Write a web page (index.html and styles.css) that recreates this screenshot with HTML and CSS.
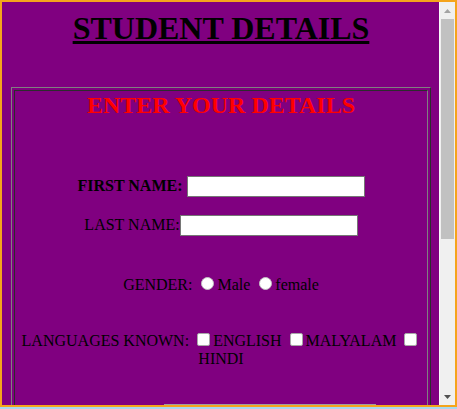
FILE: index.html
```html
<!DOCTYPE html>
<html>
<head>
<meta charset="utf-8">
<title>Student Details</title>
<link rel="stylesheet" href="styles.css">
</head>
<body>
<div class="screen">
  <div class="window">
    <div class="viewport">
      <div class="page">
        <h1 class="title">STUDENT DETAILS</h1>
        <div class="frame">
          <div class="cell">
            <h2 class="subtitle">ENTER YOUR DETAILS</h2>
            <div class="row row-first"><b>FIRST NAME:</b> <input class="text-input" type="text"></div>
            <div class="row row-last">LAST NAME:<input class="text-input" type="text"></div>
            <div class="row row-gender">GENDER: <input class="radio" type="radio" name="gender">Male <input class="radio" type="radio" name="gender">female</div>
            <div class="row row-lang">LANGUAGES KNOWN: <input class="check" type="checkbox">ENGLISH <input class="check" type="checkbox">MALYALAM <input class="check" type="checkbox"><br>HINDI</div>
            <div class="row row-address"><textarea class="address"></textarea></div>
          </div>
        </div>
      </div>
    </div>
    <div class="scrollbar">
      <div class="sb-btn"><svg width="7" height="4" viewBox="0 0 7 4"><polygon points="0,4 3.5,0 7,4" fill="#a3a3a3"/></svg></div>
      <div class="sb-track"><div class="sb-thumb"></div></div>
      <div class="sb-btn"><svg width="7" height="4" viewBox="0 0 7 4"><polygon points="0,0 7,0 3.5,4" fill="#505050"/></svg></div>
    </div>
  </div>
</div>
</body>
</html>
```

FILE: styles.css
```css
html, body {
  margin: 0;
  padding: 0;
}

body {
  width: 457px;
  height: 409px;
  overflow: hidden;
  font-family: "Liberation Serif", "Times New Roman", serif;
  font-size: 16px;
  color: #000;
  background: #a6d8f0;
}

.screen {
  height: 409px;
  box-sizing: border-box;
  border-bottom: 2px solid #a6d8f0;
}

.window {
  display: flex;
  height: 407px;
  box-sizing: border-box;
  border: 2px solid #f5a41c;
}

.viewport {
  flex: 1;
  background: #800080;
  overflow: hidden;
}

.page {
  padding: 8px 8px 0 9px;
}

.title {
  margin: 0 0 40px;
  font-size: 32px;
  font-weight: bold;
  line-height: normal;
  text-align: center;
  text-decoration: underline;
}

.frame {
  width: 420px;
  box-sizing: border-box;
  border: 1px outset grey;
  padding: 2px;
}

.cell {
  border: 1px inset grey;
  padding: 1px;
  text-align: center;
}

.subtitle {
  margin: 0;
  font-size: 24px;
  font-weight: bold;
  line-height: normal;
  color: #ff0000;
}

.row {
  line-height: normal;
}

.row-first {
  margin-top: 57px;
}

.row-last {
  margin-top: 18px;
}

.row-gender {
  margin-top: 38px;
}

.row-lang {
  margin-top: 36px;
  line-height: 18px;
}

.row-address {
  margin-top: 36px;
  padding-left: 98px;
  line-height: 0;
}

.text-input {
  width: 178px;
  height: 21px;
  box-sizing: border-box;
  margin: 0;
  padding: 1px 2px;
  border: 1px solid #767676;
  background: #fff;
  font: 13.333px Arial, "Liberation Sans", sans-serif;
  vertical-align: baseline;
}

.radio {
  appearance: none;
  -webkit-appearance: none;
  width: 13px;
  height: 13px;
  box-sizing: border-box;
  margin: 3px 3px 0 5px;
  border: 1px solid #c4c4c4;
  border-radius: 50%;
  background: #fff;
  vertical-align: baseline;
}

.check {
  appearance: none;
  -webkit-appearance: none;
  width: 13px;
  height: 13px;
  box-sizing: border-box;
  margin: 3px 3px 0 4px;
  border: 1px solid #a8a8a8;
  border-radius: 2px;
  background: #fff;
  vertical-align: baseline;
}

.address {
  display: inline-block;
  width: 212px;
  height: 60px;
  box-sizing: border-box;
  margin: 0;
  border: 1px solid #a0a0a0;
  background: #fff;
  vertical-align: top;
  resize: none;
}

.scrollbar {
  width: 16px;
  display: flex;
  flex-direction: column;
  background: #f0f0f0;
  box-shadow: inset 1px 0 #fafafa;
}

.sb-btn {
  height: 17px;
  display: flex;
  align-items: center;
  justify-content: center;
}

.sb-btn svg {
  display: block;
}

.sb-track {
  flex: 1;
  padding: 0 1px 0 2px;
}

.sb-thumb {
  height: 220px;
  background: #c1c1c1;
}
```
